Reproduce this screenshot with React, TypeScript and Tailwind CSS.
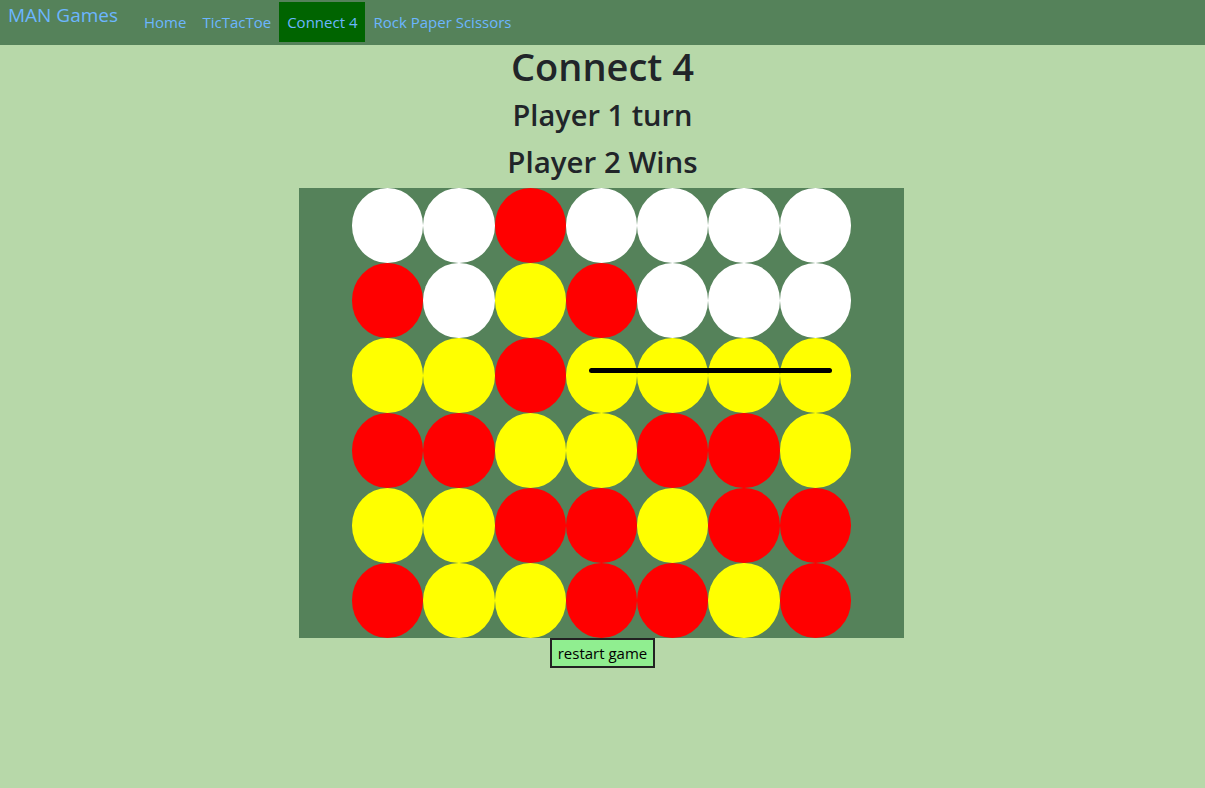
import React from "react";

const W = "bg-white";
const R = "bg-[#ff0000]";
const Y = "bg-[#ffff00]";

const grid: string[][] = [
  [W, W, R, W, W, W, W],
  [R, W, Y, R, W, W, W],
  [Y, Y, R, Y, Y, Y, Y],
  [R, R, Y, Y, R, R, Y],
  [Y, Y, R, R, Y, R, R],
  [R, Y, Y, R, R, Y, R],
];

export default function App() {
  return (
    <div
      className="min-h-[788px] bg-[#b7d8a9] text-[#212529]"
      style={{ fontFamily: '"Open Sans", "Noto Sans", sans-serif' }}
    >
      <nav className="flex h-[45px] items-start bg-[#55825a]">
        <div className="ml-2 mt-[3px] text-[19px] leading-[24px] text-[#6cb6ff]">MAN Games</div>
        <div className="ml-[18px] mt-[2px] flex text-[15px] text-[#6cb6ff]">
          <a className="flex h-[40px] items-center px-2">Home</a>
          <a className="flex h-[40px] items-center px-2">TicTacToe</a>
          <a className="flex h-[40px] items-center bg-[#006400] px-2">Connect 4</a>
          <a className="flex h-[40px] items-center px-2">Rock Paper Scissors</a>
        </div>
      </nav>
      <div className="flex flex-col items-center">
        <h1 className="h-[44px] text-[38px] font-semibold leading-[42px]">Connect 4</h1>
        <h3 className="h-[48px] pt-[4px] text-[29px] font-semibold leading-[44px]">Player 1 turn</h3>
        <h3 className="h-[51px] pt-[3px] text-[29.5px] font-semibold leading-[44px]">Player 2 Wins</h3>
        <div className="relative -ml-[2px] flex h-[450px] w-[605px] justify-center bg-[#55825a]">
          {grid[0].map((_, c) => (
            <div key={c} className="flex w-[71.3px] flex-col">
              {grid.map((row, r) => (
                <div key={r} className={`h-[75px] w-full rounded-[50%] ${row[c]}`} />
              ))}
            </div>
          ))}
          <div className="absolute left-[290px] top-[180px] h-[5px] w-[243px] rounded-full bg-black" />
        </div>
        <button className="h-[30px] border-2 border-[#222] bg-[#90ee90] px-[6px] text-[15px] leading-[24px] text-black">
          restart game
        </button>
      </div>
    </div>
  );
}
